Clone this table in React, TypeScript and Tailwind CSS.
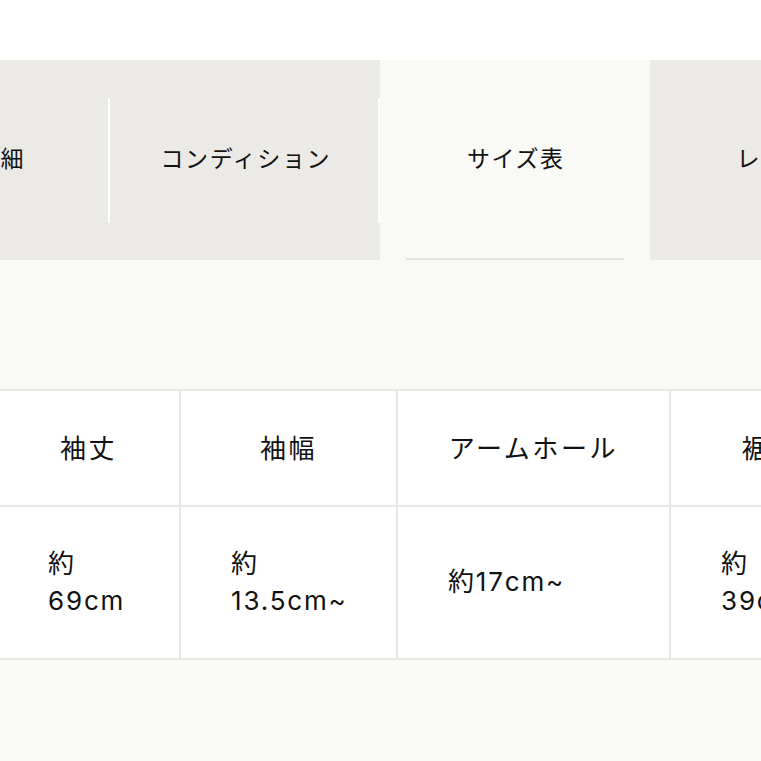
import React from 'react';

const tabs = [
  { label: '商品詳細', active: false },
  { label: 'コンディション', active: false },
  { label: 'サイズ表', active: true },
  { label: 'レビュー', active: false },
];

const columns = [
  { head: '袖丈', value: '約69cm', width: 'w-[183px]' },
  { head: '袖幅', value: '約13.5cm~', width: 'w-[217px]' },
  { head: 'アームホール', value: '約17cm~', width: 'w-[273px]' },
  { head: '裾幅', value: '約39cm', width: 'w-[200px]' },
];

const App: React.FC = () => {
  return (
    <div
      className="w-[761px] h-[761px] overflow-hidden bg-[#f9f9f6] text-[#111111]"
      style={{ fontFamily: 'Inter, "Noto Sans CJK JP", sans-serif' }}
    >
      <div className="h-[60px] bg-white" />

      {/* タブ */}
      <div className="flex h-[200px] ml-[-160px] w-[1100px]">
        {tabs.map((tab) => (
          <div
            key={tab.label}
            className={`relative w-[270px] shrink-0 flex items-center justify-center ${
              tab.active ? 'bg-[#f9f9f6]' : 'bg-[#ebeae6]'
            }`}
          >
            <span className="text-[23px] tracking-[0.07em] pl-[0.07em] mt-[-2px]">
              {tab.label}
            </span>
            {!tab.active && (
              <span className="absolute right-0 top-[38px] bottom-[37px] w-[2px] bg-white" />
            )}
            {tab.active && (
              <span className="absolute left-[26px] right-[26px] bottom-0 h-[2px] bg-[#e2e2df]" />
            )}
          </div>
        ))}
      </div>

      {/* サイズ表 */}
      <div className="mt-[129px] ml-[-4px]">
        <table className="table-fixed border-collapse bg-white w-[873px]">
          <tbody>
            <tr className="h-[116px]">
              {columns.map((c) => (
                <th
                  key={c.head}
                  className={`${c.width} border-2 border-[#e7e7e6] font-normal text-[26px] tracking-[0.1em] text-center`}
                >
                  {c.head}
                </th>
              ))}
            </tr>
            <tr className="h-[153px]">
              {columns.map((c) => (
                <td
                  key={c.head}
                  className="border-2 border-[#e7e7e6] px-[50px] text-[26px] leading-[37px] tracking-[0.07em] align-middle"
                >
                  <span className="relative top-[-1px]">{c.value}</span>
                </td>
              ))}
            </tr>
          </tbody>
        </table>
      </div>
    </div>
  );
};

export default App;
